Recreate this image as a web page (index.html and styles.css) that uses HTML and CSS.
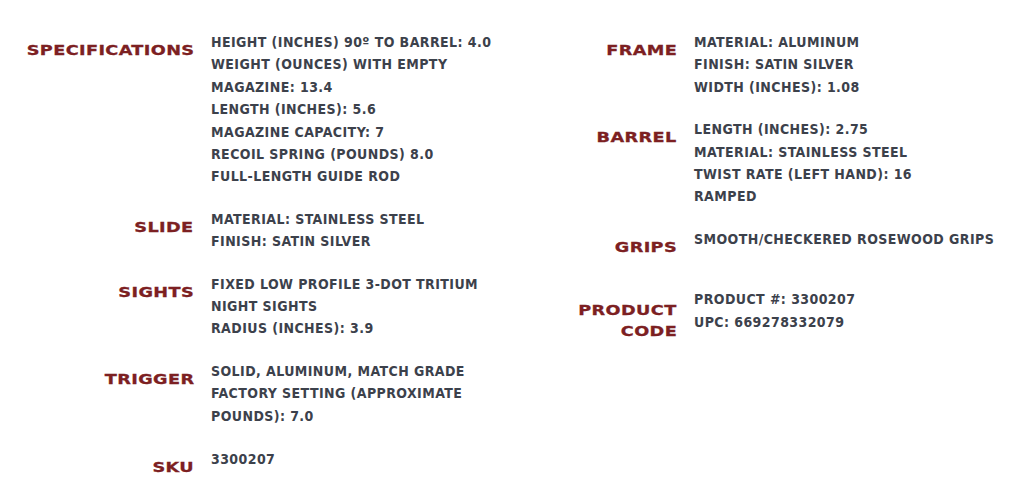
FILE: index.html
```html
<!DOCTYPE html>
<html lang="en">
<head>
<meta charset="utf-8">
<title>Specifications</title>
<link rel="stylesheet" href="styles.css">
</head>
<body>
<div class="specs">
  <div class="col">
    <div class="row">
      <div class="label"><span>SPECIFICATIONS</span></div>
      <div class="value">
        <div>HEIGHT (INCHES) 90º TO BARREL: 4.0</div>
        <div>WEIGHT (OUNCES) WITH EMPTY</div>
        <div>MAGAZINE: 13.4</div>
        <div>LENGTH (INCHES): 5.6</div>
        <div>MAGAZINE CAPACITY: 7</div>
        <div>RECOIL SPRING (POUNDS) 8.0</div>
        <div>FULL-LENGTH GUIDE ROD</div>
      </div>
    </div>
    <div class="row">
      <div class="label"><span>SLIDE</span></div>
      <div class="value">
        <div>MATERIAL: STAINLESS STEEL</div>
        <div>FINISH: SATIN SILVER</div>
      </div>
    </div>
    <div class="row">
      <div class="label"><span>SIGHTS</span></div>
      <div class="value">
        <div>FIXED LOW PROFILE 3-DOT TRITIUM</div>
        <div>NIGHT SIGHTS</div>
        <div>RADIUS (INCHES): 3.9</div>
      </div>
    </div>
    <div class="row">
      <div class="label"><span>TRIGGER</span></div>
      <div class="value">
        <div>SOLID, ALUMINUM, MATCH GRADE</div>
        <div>FACTORY SETTING (APPROXIMATE</div>
        <div>POUNDS): 7.0</div>
      </div>
    </div>
    <div class="row row-last">
      <div class="label"><span>SKU</span></div>
      <div class="value">
        <div>3300207</div>
      </div>
    </div>
  </div>
  <div class="col">
    <div class="row">
      <div class="label"><span>FRAME</span></div>
      <div class="value">
        <div>MATERIAL: ALUMINUM</div>
        <div>FINISH: SATIN SILVER</div>
        <div>WIDTH (INCHES): 1.08</div>
      </div>
    </div>
    <div class="row">
      <div class="label"><span>BARREL</span></div>
      <div class="value">
        <div>LENGTH (INCHES): 2.75</div>
        <div>MATERIAL: STAINLESS STEEL</div>
        <div>TWIST RATE (LEFT HAND): 16</div>
        <div>RAMPED</div>
      </div>
    </div>
    <div class="row">
      <div class="label"><span>GRIPS</span></div>
      <div class="value">
        <div>SMOOTH/CHECKERED ROSEWOOD GRIPS</div>
      </div>
    </div>
    <div class="row row-code">
      <div class="label"><span>PRODUCT</span><br><span>CODE</span></div>
      <div class="value">
        <div>PRODUCT #: 3300207</div>
        <div>UPC: 669278332079</div>
      </div>
    </div>
  </div>
</div>
</body>
</html>
```

FILE: styles.css
```css
html, body {
  margin: 0;
  padding: 0;
  background: #ffffff;
}

.specs {
  display: flex;
  padding: 31px 0 0 20px;
}

.col {
  width: 483px;
  display: flex;
  flex-direction: column;
  gap: 20px;
}

.row {
  display: flex;
  gap: 17px;
}

.label {
  width: 174px;
  flex: none;
  text-align: right;
  padding: 9px 0 11px;
  font-family: "DejaVu Sans", sans-serif;
  font-weight: bold;
  font-size: 14.5px;
  line-height: 20.5px;
  color: #7c2022;
  white-space: nowrap;
}

.label span {
  display: inline-block;
  letter-spacing: 0.3px;
  transform: scaleX(1.22);
  transform-origin: right center;
  -webkit-text-stroke: 0.3px #7c2022;
}

.row-code .label {
  padding-top: 12px;
}

.row-last {
  margin-top: 1px;
}

.value {
  font-family: "DejaVu Sans Condensed", "Liberation Sans Narrow", sans-serif;
  font-weight: 600;
  font-size: 14px;
  line-height: 22.4px;
  letter-spacing: 0.42px;
  color: #3c414b;
  white-space: nowrap;
}
```
